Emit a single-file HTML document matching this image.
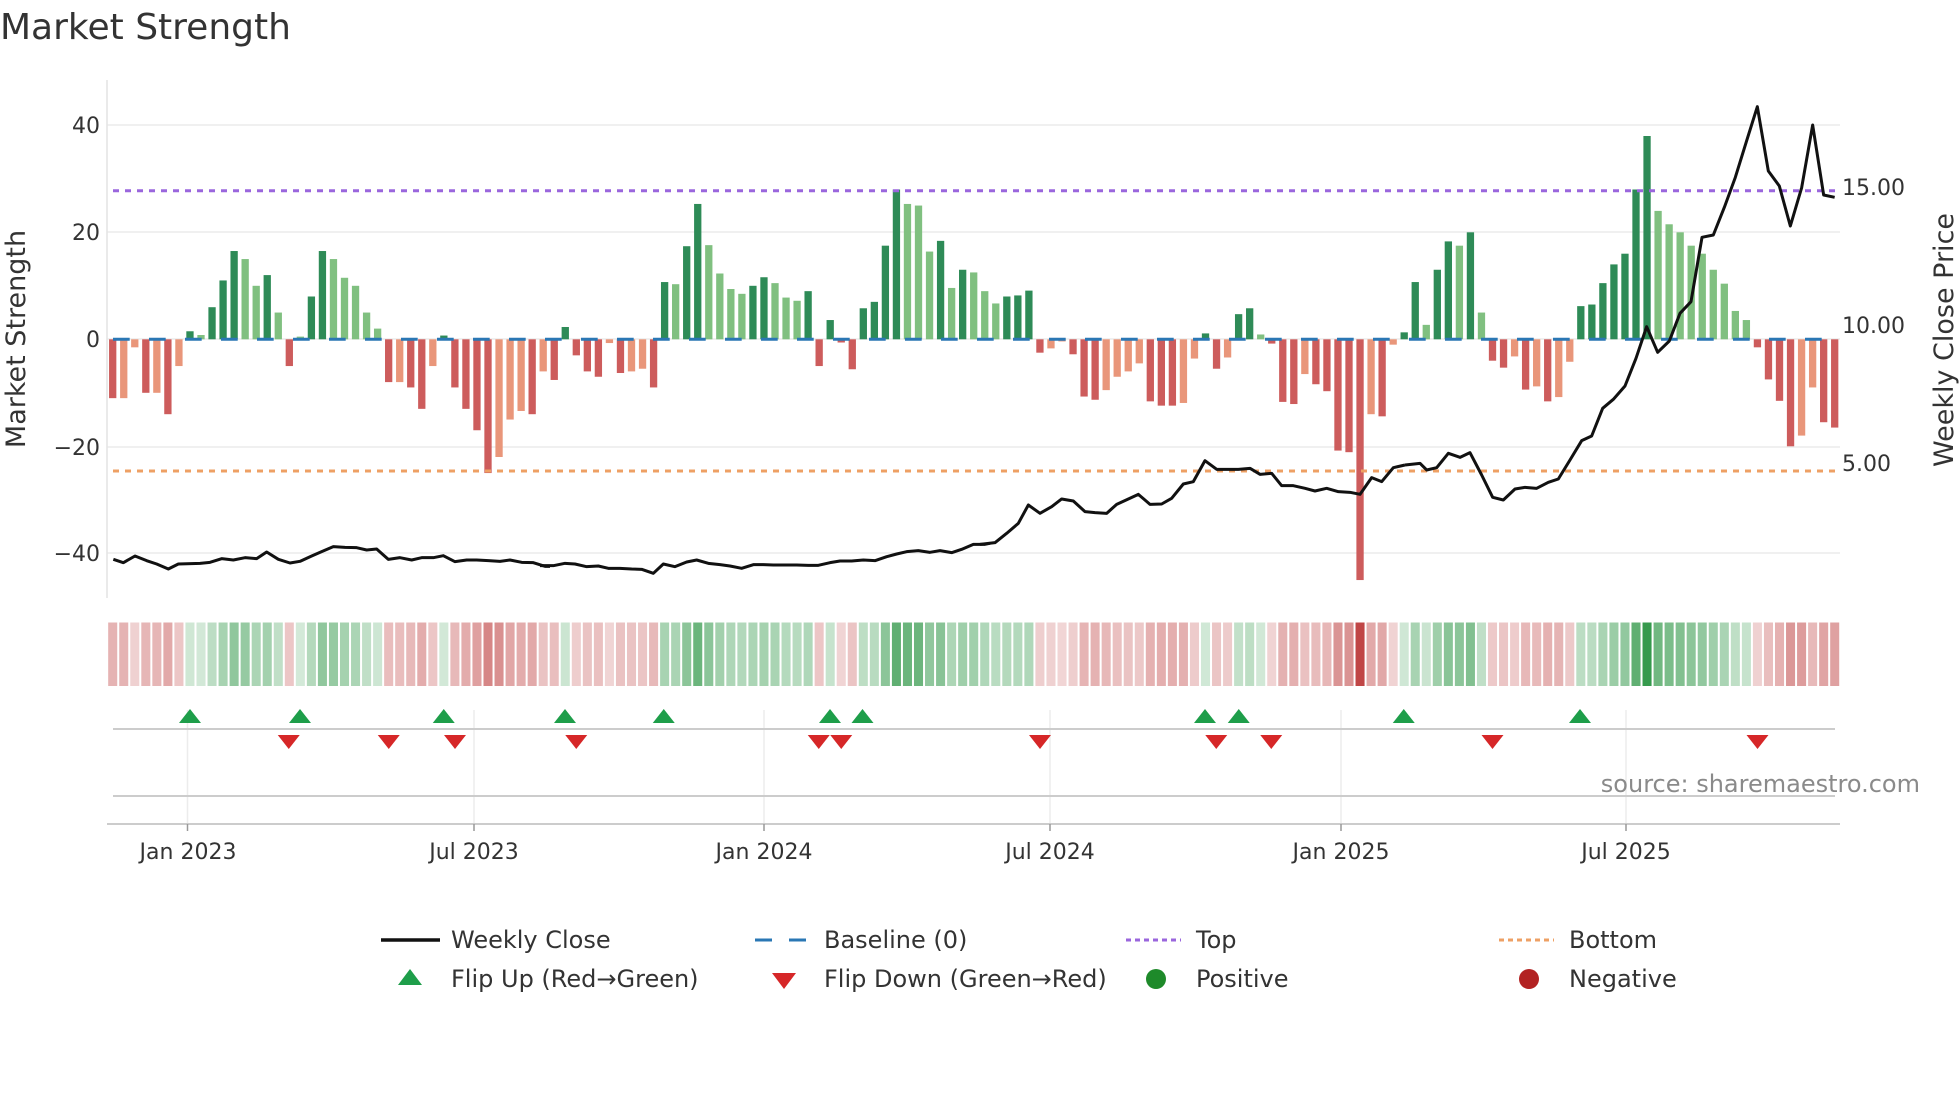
<!DOCTYPE html>
<html><head><meta charset="utf-8"><style>
html,body{margin:0;padding:0;background:#fff;}
svg{display:block;font-family:"DejaVu Sans","Liberation Sans",sans-serif;}
</style></head><body>
<svg id="s" width="1960" height="1102" viewBox="0 0 1960 1102" xmlns="http://www.w3.org/2000/svg">
<text x="0" y="39" font-size="36" fill="#333">Market Strength</text>
<g stroke="#ececec" stroke-width="1.5">
<line x1="107" x2="1840" y1="125" y2="125"/><line x1="107" x2="1840" y1="232" y2="232"/>
<line x1="107" x2="1840" y1="339" y2="339"/><line x1="107" x2="1840" y1="447" y2="447"/>
<line x1="107" x2="1840" y1="553" y2="553"/>
</g>
<line x1="107" x2="107" y1="80" y2="598" stroke="#e4e4e4" stroke-width="1.5"/>
<g font-size="22" fill="#333" text-anchor="end">
<text x="100" y="133">40</text><text x="100" y="240">20</text><text x="100" y="347">0</text>
<text x="100" y="455">−20</text><text x="100" y="561">−40</text>
</g>
<g font-size="22" fill="#333">
<text x="1842" y="195">15.00</text><text x="1842" y="333">10.00</text><text x="1842" y="471">5.00</text>
</g>
<text transform="translate(25,339) rotate(-90)" font-size="27" fill="#333" text-anchor="middle">Market Strength</text>
<text transform="translate(1953,340) rotate(-90)" font-size="27" fill="#333" text-anchor="middle">Weekly Close Price</text>
<g id="bars"></g>
<line x1="113" x2="1838" y1="339.3" y2="339.3" stroke="#2a77b4" stroke-width="3" stroke-dasharray="16.7 19.3"/>
<line x1="113" x2="1838" y1="190.7" y2="190.7" stroke="#9a66dd" stroke-width="3" stroke-dasharray="6 6"/>
<line x1="113" x2="1838" y1="471" y2="471" stroke="#eea064" stroke-width="3" stroke-dasharray="6 6"/>
<g fill="none" stroke="#111" stroke-width="9" stroke-linejoin="round">
<polyline transform="translate(100,100) scale(0.33333)" points="40,1378 70,1388 105,1368 140,1382 170,1392 205,1407 235,1392 300,1390 330,1387 365,1376 400,1380 435,1373 470,1376 500,1356 535,1378 570,1389 600,1384 635,1368 665,1355 700,1340 735,1342 770,1343 800,1350 830,1347 865,1378 900,1373 935,1380 965,1373 1000,1373 1030,1367 1065,1385 1100,1380 1130,1380 1165,1382 1200,1384 1230,1380 1265,1387 1300,1388 1335,1399 1350,1399"/>
<polyline transform="translate(540,100) scale(0.33333)" points="0,1397 40,1397 75,1390 105,1392 140,1400 175,1398 205,1405 240,1405 275,1407 305,1408 340,1420 370,1392 405,1400 440,1386 470,1380 505,1390 540,1394 570,1398 605,1405 640,1394 670,1394 700,1395 740,1395 770,1395 805,1396 835,1396 870,1388 900,1383 935,1383 970,1380 1005,1382 1040,1370 1070,1362 1100,1355 1135,1352 1170,1357 1200,1352 1235,1358 1265,1348 1300,1333 1335,1333 1350,1330"/>
<polyline transform="translate(980,100) scale(0.33333)" points="0,1333 45,1328 80,1300 115,1270 145,1215 180,1240 215,1220 245,1197 280,1203 315,1235 345,1238 380,1240 410,1213 445,1197 475,1183 510,1213 545,1212 575,1195 610,1152 640,1145 675,1082 710,1108 745,1108 775,1108 810,1105 840,1123 875,1120 905,1157 940,1157 975,1165 1005,1173 1040,1165 1075,1175 1110,1177 1140,1183 1175,1133 1205,1145 1240,1103 1275,1095"/>
<polyline transform="translate(1420,100) scale(0.33333)" points="-45,1095 0,1090 20,1110 50,1103 85,1060 120,1072 150,1058 185,1125 218,1192 250,1200 285,1167 315,1162 350,1165 385,1147 415,1137 450,1080 485,1022 515,1008 548,925 580,898 615,858 648,775 680,680 713,757 748,723 780,640 813,605 846,412 880,405 913,322 946,232 980,122 1012,20 1045,213 1078,258 1111,378 1145,263 1178,75 1211,285 1244,292"/>
</g>
<g id="heat"></g>
<g stroke="#ececec" stroke-width="1.5">
<line x1="187.5" x2="187.5" y1="710" y2="824"/><line x1="474" x2="474" y1="710" y2="824"/>
<line x1="764" x2="764" y1="710" y2="824"/><line x1="1050" x2="1050" y1="710" y2="824"/>
<line x1="1341" x2="1341" y1="710" y2="824"/><line x1="1626" x2="1626" y1="710" y2="824"/>
</g>
<line x1="113" x2="1835" y1="729" y2="729" stroke="#ccc" stroke-width="2"/>
<line x1="113" x2="1835" y1="796" y2="796" stroke="#ccc" stroke-width="2"/>
<line x1="107" x2="1840" y1="824" y2="824" stroke="#ccc" stroke-width="2"/>
<g stroke="#999" stroke-width="1.5">
<line x1="187.5" x2="187.5" y1="824" y2="831"/><line x1="474" x2="474" y1="824" y2="831"/>
<line x1="764" x2="764" y1="824" y2="831"/><line x1="1050" x2="1050" y1="824" y2="831"/>
<line x1="1341" x2="1341" y1="824" y2="831"/><line x1="1626" x2="1626" y1="824" y2="831"/>
</g>
<g id="marks"></g>
<g font-size="22" fill="#333" text-anchor="middle">
<text x="188" y="859">Jan 2023</text><text x="474" y="859">Jul 2023</text><text x="764" y="859">Jan 2024</text>
<text x="1050" y="859">Jul 2024</text><text x="1341" y="859">Jan 2025</text><text x="1626" y="859">Jul 2025</text>
</g>
<text x="1920" y="792" font-size="24" fill="#8a8a8a" text-anchor="end">source: sharemaestro.com</text>
<g font-size="24" fill="#333">
<line x1="381" x2="440" y1="940" y2="940" stroke="#111" stroke-width="3.5"/>
<text x="451" y="948">Weekly Close</text>
<line x1="755" x2="806" y1="940" y2="940" stroke="#2a77b4" stroke-width="3" stroke-dasharray="17 17"/>
<text x="824" y="948">Baseline (0)</text>
<line x1="1126" x2="1181" y1="940" y2="940" stroke="#9a66dd" stroke-width="3" stroke-dasharray="5 4"/>
<text x="1196" y="948">Top</text>
<line x1="1499" x2="1554" y1="940" y2="940" stroke="#eea064" stroke-width="3" stroke-dasharray="5 4"/>
<text x="1569" y="948">Bottom</text>
<polygon points="398,985 422,985 410,969" fill="#1e9e4a"/>
<text x="451" y="987">Flip Up (Red→Green)</text>
<polygon points="772,973 796,973 784,989" fill="#d62728"/>
<text x="824" y="987">Flip Down (Green→Red)</text>
<circle cx="1156" cy="979" r="10" fill="#1e8a2a"/>
<text x="1196" y="987">Positive</text>
<circle cx="1529" cy="979" r="10" fill="#b22222"/>
<text x="1569" y="987">Negative</text>
</g>
</svg>
<script>
var d=[[-11,1],[-11,0],[-1.5,0],[-10,1],[-10,0],[-14,1],[-5,0],[1.5,1],[0.8,0],[6,1],[11,1],[16.5,1],[15,0],[10,0],[12,1],[5,0],[-5,1],[0.5,0],[8,1],[16.5,1],[15,0],[11.5,0],[10,0],[5,0],[2,0],
[-8,1],[-8,0],[-9,1],[-13,1],[-5,0],[0.7,1],[-9,1],[-13,1],[-17,1],[-25,1],[-22,0],[-15,0],[-13.4,0],[-14,1],[-6,0],
[-7.6,1],[2.3,1],[-3,1],[-6,1],[-7,1],[-0.7,0],[-6.3,1],[-6,0],[-5.5,0],[-9,1],[10.7,1],[10.3,0],[17.4,1],[25.3,1],[17.6,0],[12.3,0],[9.4,0],[8.5,0],[10,1],[11.6,1],[10.5,0],[7.8,0],[7.2,0],[9,1],[-5,1],[3.6,1],[-0.6,1],[-5.6,1],[5.8,1],[7,1],[17.5,1],[28,1],[25.3,0],[25,0],[16.4,0],[18.4,1],[9.6,0],[13,1],[12.5,0],[9,0],
[6.7,0],[8,1],[8.2,1],[9.1,1],[-2.5,1],[-1.7,0],[-0.4,0],[-2.8,1],[-10.7,1],[-11.3,1],[-9.5,0],[-7,0],[-6,0],[-4.5,0],[-11.6,1],[-12.4,1],[-12.4,1],[-11.9,0],[-3.6,0],[1.1,1],[-5.5,1],[-3.4,0],[4.7,1],[5.8,1],[0.9,0],[-0.8,1],[-11.7,1],[-12.1,1],[-6.5,0],[-8.4,1],[-9.7,1],[-20.8,1],[-21.1,1],[-45,1],[-14,0],[-14.4,1],[-1,0],[1.3,1],[10.7,1],[2.7,0],
[13,1],[18.3,1],[17.5,0],[20,1],[5,0],[-4,1],[-5.3,1],[-3.2,0],[-9.4,1],[-8.8,0],[-11.6,1],[-10.8,0],[-4.2,0],
[6.2,1],[6.5,1],[10.5,1],[14,1],[16,1],[28,1],[38,1],[24,0],[21.5,0],[20,0],[17.5,0],[16,0],[13,0],[10.4,0],[5.3,0],[3.6,0],
[-1.5,1],[-7.5,1],[-11.5,1],[-20,1],[-18,0],[-9,0],[-15.5,1],[-16.5,1]];
var NS="http://www.w3.org/2000/svg",b=document.getElementById("bars"),h=document.getElementById("heat"),m=document.getElementById("marks");
function R(g,x,y,w,hh,f){var r=document.createElementNS(NS,"rect");r.setAttribute("x",x);r.setAttribute("y",y);r.setAttribute("width",w);r.setAttribute("height",hh);r.setAttribute("fill",f);g.appendChild(r);}
var x0=112.7,sp=(1834.7-112.7)/(d.length-1),z=339.3,k=5.35;
for(var i=0;i<d.length;i++){var v=d[i][0],dk=d[i][1],cx=x0+i*sp;
var c=v>=0?(dk?"#2e8b57":"#80c080"):(dk?"#cd5c5c":"#e9967a");
var hgt=Math.abs(v)*k;R(b,cx-3.65,v>=0?z-hgt:z,7.3,hgt,c);
var a=0.22+0.78*Math.min(Math.abs(v)/45,1);
var hc=v>=0?"rgba(46,150,70,"+(0.2+0.8*Math.min(v/40,1))+")":"rgba(192,70,70,"+a+")";
R(h,cx-sp/2+1,622.5,sp-2,63.5,hc);}
var up=[152,240,355,452,531,664,690,964,991,1123,1264],dn=[231,311,364,461,655,673,832,973,1017,1194,1406];
function P(pts,f){var p=document.createElementNS(NS,"polygon");p.setAttribute("points",pts);p.setAttribute("fill",f);m.appendChild(p);}
up.forEach(function(u){var x=u*1.25;P((x-11)+",723 "+(x+11)+",723 "+x+",709","#1e9e4a");});
dn.forEach(function(u){var x=u*1.25;P((x-11)+",735 "+(x+11)+",735 "+x+",749","#d62728");});
</script>
</body></html>
